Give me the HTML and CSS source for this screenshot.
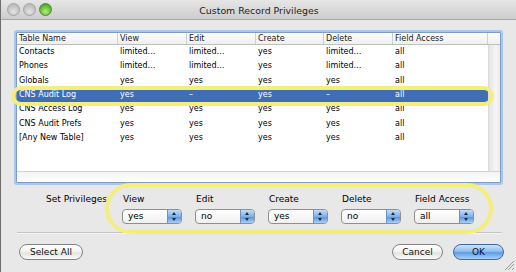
FILE: index.html
```html
<!DOCTYPE html>
<html lang="en">
  <head>
    <meta http-equiv="Content-Type" content="text/html; charset=utf-8" />
    <title>Custom Record Privileges</title>
    <link rel="stylesheet" href="styles.css">
  </head>
  <body>
    <div class="window">
      <div class="titlebar">
        <div class="lights">
          <span class="light"></span>
          <span class="light"></span>
          <span class="light light-green"></span>
        </div>
        <div class="title">Custom Record Privileges</div>
      </div>

      <div class="content">
        <div class="list">
          <div class="list-head">
            <div class="cell">Table Name</div>
            <div class="cell">View</div>
            <div class="cell">Edit</div>
            <div class="cell">Create</div>
            <div class="cell">Delete</div>
            <div class="cell">Field Access</div>
            <div class="cell corner"></div>
          </div>
          <div class="list-body">
            <div class="rows">
              <div class="row"><span>Contacts</span><span>limited…</span><span>limited…</span><span>yes</span><span>limited…</span><span>all</span></div>
              <div class="row"><span>Phones</span><span>limited…</span><span>limited…</span><span>yes</span><span>limited…</span><span>all</span></div>
              <div class="row"><span>Globals</span><span>yes</span><span>yes</span><span>yes</span><span>yes</span><span>all</span></div>
              <div class="row row-selected"><span>CNS Audit Log</span><span>yes</span><span>–</span><span>yes</span><span>–</span><span>all</span></div>
              <div class="row"><span>CNS Access Log</span><span>yes</span><span>yes</span><span>yes</span><span>yes</span><span>all</span></div>
              <div class="row"><span>CNS Audit Prefs</span><span>yes</span><span>yes</span><span>yes</span><span>yes</span><span>all</span></div>
              <div class="row"><span>[Any New Table]</span><span>yes</span><span>yes</span><span>yes</span><span>yes</span><span>all</span></div>
            </div>
            <div class="scroller"></div>
          </div>
          <div class="list-foot"></div>
        </div>

        <div class="privs">
          <div class="privs-title">Set Privileges</div>
          <div class="field">
            <div class="field-label">View</div>
            <div class="popup"><span class="popup-text">yes</span><span class="popup-arrows"></span></div>
          </div>
          <div class="field">
            <div class="field-label">Edit</div>
            <div class="popup"><span class="popup-text">no</span><span class="popup-arrows"></span></div>
          </div>
          <div class="field">
            <div class="field-label">Create</div>
            <div class="popup"><span class="popup-text">yes</span><span class="popup-arrows"></span></div>
          </div>
          <div class="field">
            <div class="field-label">Delete</div>
            <div class="popup"><span class="popup-text">no</span><span class="popup-arrows"></span></div>
          </div>
          <div class="field">
            <div class="field-label">Field Access</div>
            <div class="popup"><span class="popup-text">all</span><span class="popup-arrows"></span></div>
          </div>
        </div>

        <div class="separator"></div>

        <div class="buttons">
          <button type="button" class="button button-select">Select All</button>
          <div class="spacer"></div>
          <button type="button" class="button button-cancel">Cancel</button>
          <button type="button" class="button button-ok">OK</button>
        </div>
      </div>

      <!-- highlight marks drawn over the dialog -->
      <div class="mark mark-row"></div>
      <div class="mark mark-privs"></div>
      <div class="grip"></div>
    </div>
  </body>
</html>
```

FILE: styles.css
```css
html,
body {
  margin: 0;
  padding: 0;
}
body {
  background-color: #e8e8e8;
  font-family: "DejaVu Sans", "Liberation Sans", sans-serif;
  color: #000;
}
.window {
  position: relative;
  width: 516px;
  height: 272px;
  box-sizing: border-box;
  border-left: 1px solid #6e6e6e;
  background-color: #e8e8e8;
  overflow: hidden;
}

/* title bar */
.titlebar {
  position: relative;
  height: 20px;
  box-sizing: border-box;
  border-bottom: 1px solid #a8a8a8;
  background: linear-gradient(#e6e6e6, #cdcdcd);
  display: flex;
  align-items: center;
  justify-content: center;
}
.lights {
  position: absolute;
  left: 6px;
  top: 3px;
  display: flex;
  gap: 3px;
}
.light {
  width: 11px;
  height: 11px;
  border-radius: 50%;
  border: 1px solid #a3a3a3;
  background: radial-gradient(circle at 50% 70%, #e4e4e4, #bdbdbd 70%);
}
.light-green {
  border-color: #4e8a2c;
  background: radial-gradient(circle at 50% 70%, #b6ec7e, #5bb52e 65%, #3f8a1e);
}
.title {
  font-size: 9.4px;
  color: #222;
  padding-top: 1px;
  margin-left: 1px;
}

.content {
  padding: 12px 0 0 15px;
}

/* table */
.list {
  width: 485px;
  height: 151px;
  box-sizing: border-box;
  border: 1px solid #7f9cc9;
  box-shadow: 0 0 0 2px #a9c6ec;
  border-radius: 1px;
  background-color: #fff;
  display: flex;
  flex-direction: column;
}
.list-head {
  display: grid;
  grid-template-columns: 101px 69px 69px 68px 69px 95px 12px;
  height: 12px;
  box-sizing: border-box;
  border-bottom: 1px solid #bfbfbf;
  background: linear-gradient(#fdfdfd, #efefef);
  font-size: 8px;
  line-height: 11px;
}
.cell {
  padding-left: 2px;
  border-right: 1px solid #cfcfcf;
  color: #1a1a1a;
  white-space: nowrap;
}
.cell:first-child {
  padding-left: 2px;
}
.cell.corner {
  border-right: none;
}
.list-body {
  flex: 1;
  display: flex;
}
.rows {
  width: 471px;
}
.row {
  display: grid;
  grid-template-columns: 101px 69px 69px 68px 69px 95px;
  height: 14.33px;
  line-height: 14.33px;
  font-size: 8px;
  white-space: nowrap;
}
.row span {
  padding-left: 2px;
}
.row span:first-child {
  padding-left: 2px;
}
.row-selected {
  background-color: #3f6db6;
  color: #fff;
}
.scroller {
  width: 12px;
  box-sizing: border-box;
  border-left: 1px solid #dcdcdc;
  background: linear-gradient(to right, #e4e4e4, #f5f5f5 60%, #ebebeb);
}
.list-foot {
  height: 11px;
  box-sizing: border-box;
  border-top: 1px solid #d2d2d2;
  background: linear-gradient(#f3f3f3, #fff);
}

/* set privileges */
.privs {
  display: flex;
  padding: 11px 0 0 30px;
  font-size: 9px;
}
.privs-title {
  width: 76px;
  line-height: 11px;
  white-space: nowrap;
}
.field {
  width: 60px;
  margin-right: 13px;
}
.field-label {
  line-height: 11px;
  padding-left: 1px;
  white-space: nowrap;
}
.popup {
  margin-top: 4px;
  height: 15px;
  box-sizing: border-box;
  border: 1px solid #8f8f8f;
  border-radius: 4px;
  background: linear-gradient(#ffffff, #f0f0f0);
  display: flex;
  overflow: hidden;
}
.popup-text {
  flex: 1;
  padding-left: 5px;
  line-height: 13px;
  font-size: 9px;
}
.popup-arrows {
  position: relative;
  width: 13px;
  border-left: 1px solid #6c8fc4;
  background: linear-gradient(#c3dcf7, #7eb0ea 50%, #5b96de 55%, #a9cff6);
}
.popup-arrows::before,
.popup-arrows::after {
  content: "";
  position: absolute;
  left: 4px;
  border-left: 2.5px solid transparent;
  border-right: 2.5px solid transparent;
}
.popup-arrows::before {
  top: 2px;
  border-bottom: 3px solid #1d2c44;
}
.popup-arrows::after {
  bottom: 2px;
  border-top: 3px solid #1d2c44;
}

.separator {
  margin: 8px 0 0 1px;
  width: 485px;
  height: 1px;
  background-color: #c4c4c4;
  border-bottom: 1px solid #f6f6f6;
}

/* bottom buttons */
.buttons {
  display: flex;
  align-items: center;
  padding: 10px 0 0 3px;
}
.spacer {
  flex: 1;
}
.button {
  height: 16px;
  box-sizing: border-box;
  margin: 0;
  padding: 0;
  border: 1px solid #838383;
  border-radius: 8px;
  background: linear-gradient(#ffffff, #f1f1f1 50%, #e2e2e2 55%, #fbfbfb);
  font-family: "DejaVu Sans", "Liberation Sans", sans-serif;
  font-size: 9px;
  line-height: 14px;
  color: #111;
}
.button-select {
  width: 64px;
}
.button-cancel {
  width: 51px;
  margin-right: 10px;
}
.button-ok {
  width: 51px;
  margin-right: 12px;
  border-color: #3f68a6;
  background: linear-gradient(#cfe4fa, #8ebdef 45%, #5e9de4 55%, #a8d2fa);
}

/* yellow highlight marks */
.mark {
  position: absolute;
  box-sizing: border-box;
  border: 4px solid #f4ee7c;
  pointer-events: none;
}
.mark-row {
  left: 10px;
  top: 86px;
  width: 483px;
  height: 20px;
  border-radius: 10px;
}
.mark-privs {
  left: 104px;
  top: 183px;
  width: 388px;
  height: 51px;
  border-radius: 26px;
}
.grip {
  position: absolute;
  right: 2px;
  bottom: 2px;
  width: 9px;
  height: 9px;
  background: linear-gradient(135deg, transparent 45%, #9a9a9a 45%, #9a9a9a 52%, transparent 52%, transparent 65%, #9a9a9a 65%, #9a9a9a 72%, transparent 72%, transparent 85%, #9a9a9a 85%, #9a9a9a 92%, transparent 92%);
}
```
